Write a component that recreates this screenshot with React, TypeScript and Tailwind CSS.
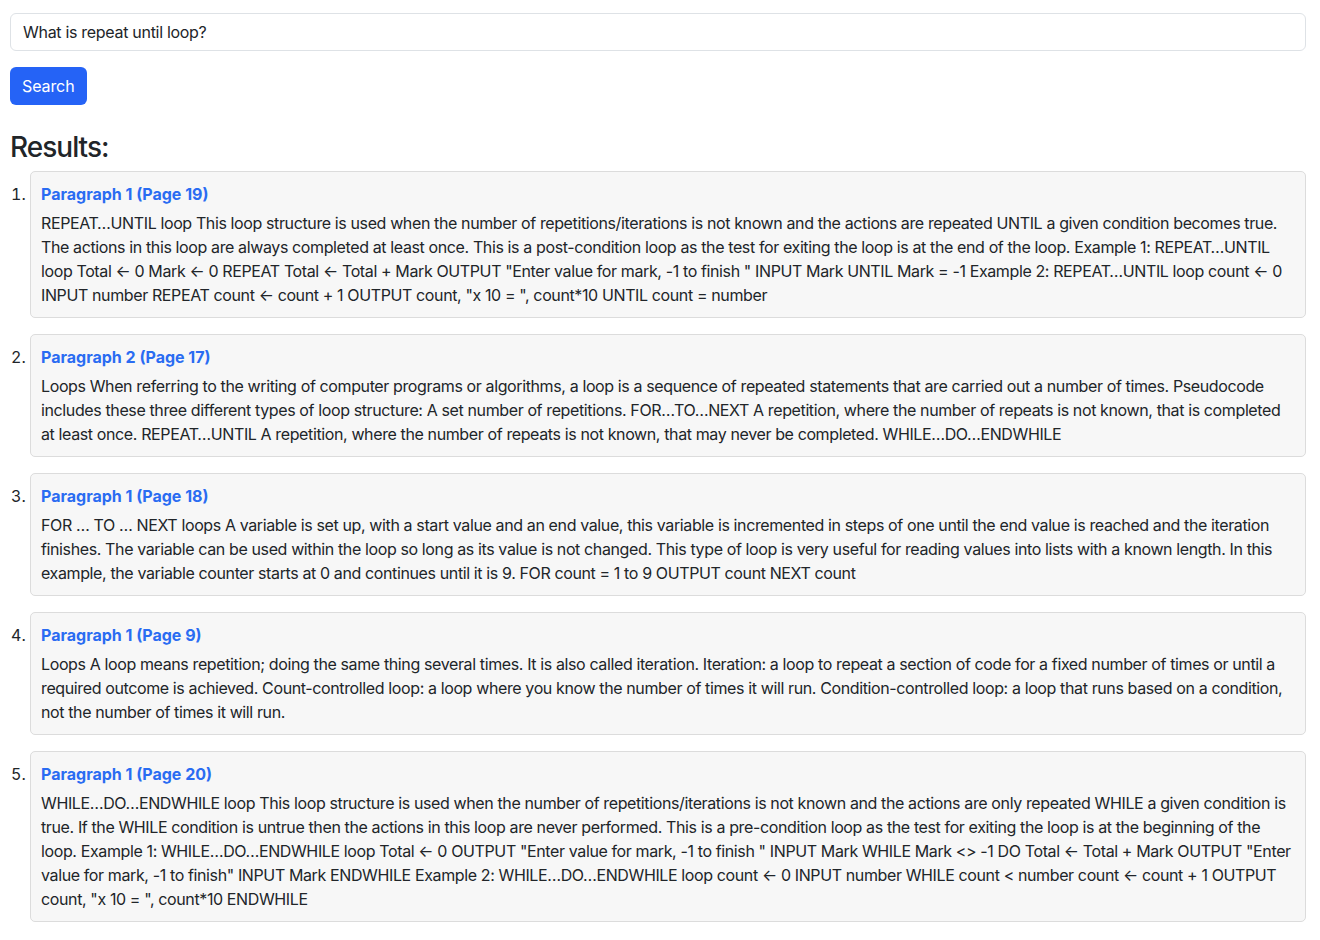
import { useState } from "react"

interface Result {
  title: string
  text: string
}

const results: Result[] = [
  {
    title: "Paragraph 1 (Page 19)",
    text: 'REPEAT…UNTIL loop This loop structure is used when the number of repetitions/iterations is not known and the actions are repeated UNTIL a given condition becomes true. The actions in this loop are always completed at least once. This is a post-condition loop as the test for exiting the loop is at the end of the loop. Example 1: REPEAT…UNTIL loop Total ← 0 Mark ← 0 REPEAT Total ← Total + Mark OUTPUT "Enter value for mark, -1 to finish " INPUT Mark UNTIL Mark = -1 Example 2: REPEAT…UNTIL loop count ← 0 INPUT number REPEAT count ← count + 1 OUTPUT count, "x 10 = ", count*10 UNTIL count = number',
  },
  {
    title: "Paragraph 2 (Page 17)",
    text: "Loops When referring to the writing of computer programs or algorithms, a loop is a sequence of repeated statements that are carried out a number of times. Pseudocode includes these three different types of loop structure: A set number of repetitions. FOR…TO…NEXT A repetition, where the number of repeats is not known, that is completed at least once. REPEAT…UNTIL A repetition, where the number of repeats is not known, that may never be completed. WHILE…DO…ENDWHILE",
  },
  {
    title: "Paragraph 1 (Page 18)",
    text: "FOR … TO … NEXT loops A variable is set up, with a start value and an end value, this variable is incremented in steps of one until the end value is reached and the iteration finishes. The variable can be used within the loop so long as its value is not changed. This type of loop is very useful for reading values into lists with a known length. In this example, the variable counter starts at 0 and continues until it is 9. FOR count = 1 to 9 OUTPUT count NEXT count",
  },
  {
    title: "Paragraph 1 (Page 9)",
    text: "Loops A loop means repetition; doing the same thing several times. It is also called iteration. Iteration: a loop to repeat a section of code for a fixed number of times or until a required outcome is achieved. Count-controlled loop: a loop where you know the number of times it will run. Condition-controlled loop: a loop that runs based on a condition, not the number of times it will run.",
  },
  {
    title: "Paragraph 1 (Page 20)",
    text: 'WHILE…DO…ENDWHILE loop This loop structure is used when the number of repetitions/iterations is not known and the actions are only repeated WHILE a given condition is true. If the WHILE condition is untrue then the actions in this loop are never performed. This is a pre-condition loop as the test for exiting the loop is at the beginning of the loop. Example 1: WHILE…DO…ENDWHILE loop Total ← 0 OUTPUT "Enter value for mark, -1 to finish " INPUT Mark WHILE Mark <> -1 DO Total ← Total + Mark OUTPUT "Enter value for mark, -1 to finish" INPUT Mark ENDWHILE Example 2: WHILE…DO…ENDWHILE loop count ← 0 INPUT number WHILE count < number count ← count + 1 OUTPUT count, "x 10 = ", count*10 ENDWHILE',
  },
]

export default function App() {
  const [query, setQuery] = useState("What is repeat until loop?")

  return (
    <div className="min-h-screen bg-white pl-[10px] pr-[14px] pt-[13px] font-['Inter','Liberation_Sans',sans-serif] text-[16px] leading-[24px] text-[#212529]">
      <input
        type="text"
        value={query}
        onChange={(e) => setQuery(e.target.value)}
        className="block h-[38px] w-full rounded-[6px] border border-[#dee2e6] px-[12px] text-[16px] tracking-[-0.3px] text-[#212529] outline-none"
      />
      <button className="mt-[16px] h-[38px] rounded-[6px] bg-[#2563f6] px-[12px] text-[16px] tracking-[-0.1px] text-white">
        Search
      </button>

      <h3 className="mt-[26px] mb-[8px] text-[28px] leading-[32px] font-medium tracking-[-1px]">Results:</h3>

      <ol className="list-decimal pl-[20px]">
        {results.map((result, i) => (
          <li key={i} className="mb-[16px]">
            <div className="rounded-[5px] border border-[#dcdcdc] bg-[#f7f7f7] p-[10px]">
              <div className="mb-[5px] font-bold text-[#2a6cf2]">{result.title}</div>
              <p className="tracking-[-0.38px]">{result.text}</p>
            </div>
          </li>
        ))}
      </ol>
    </div>
  )
}
